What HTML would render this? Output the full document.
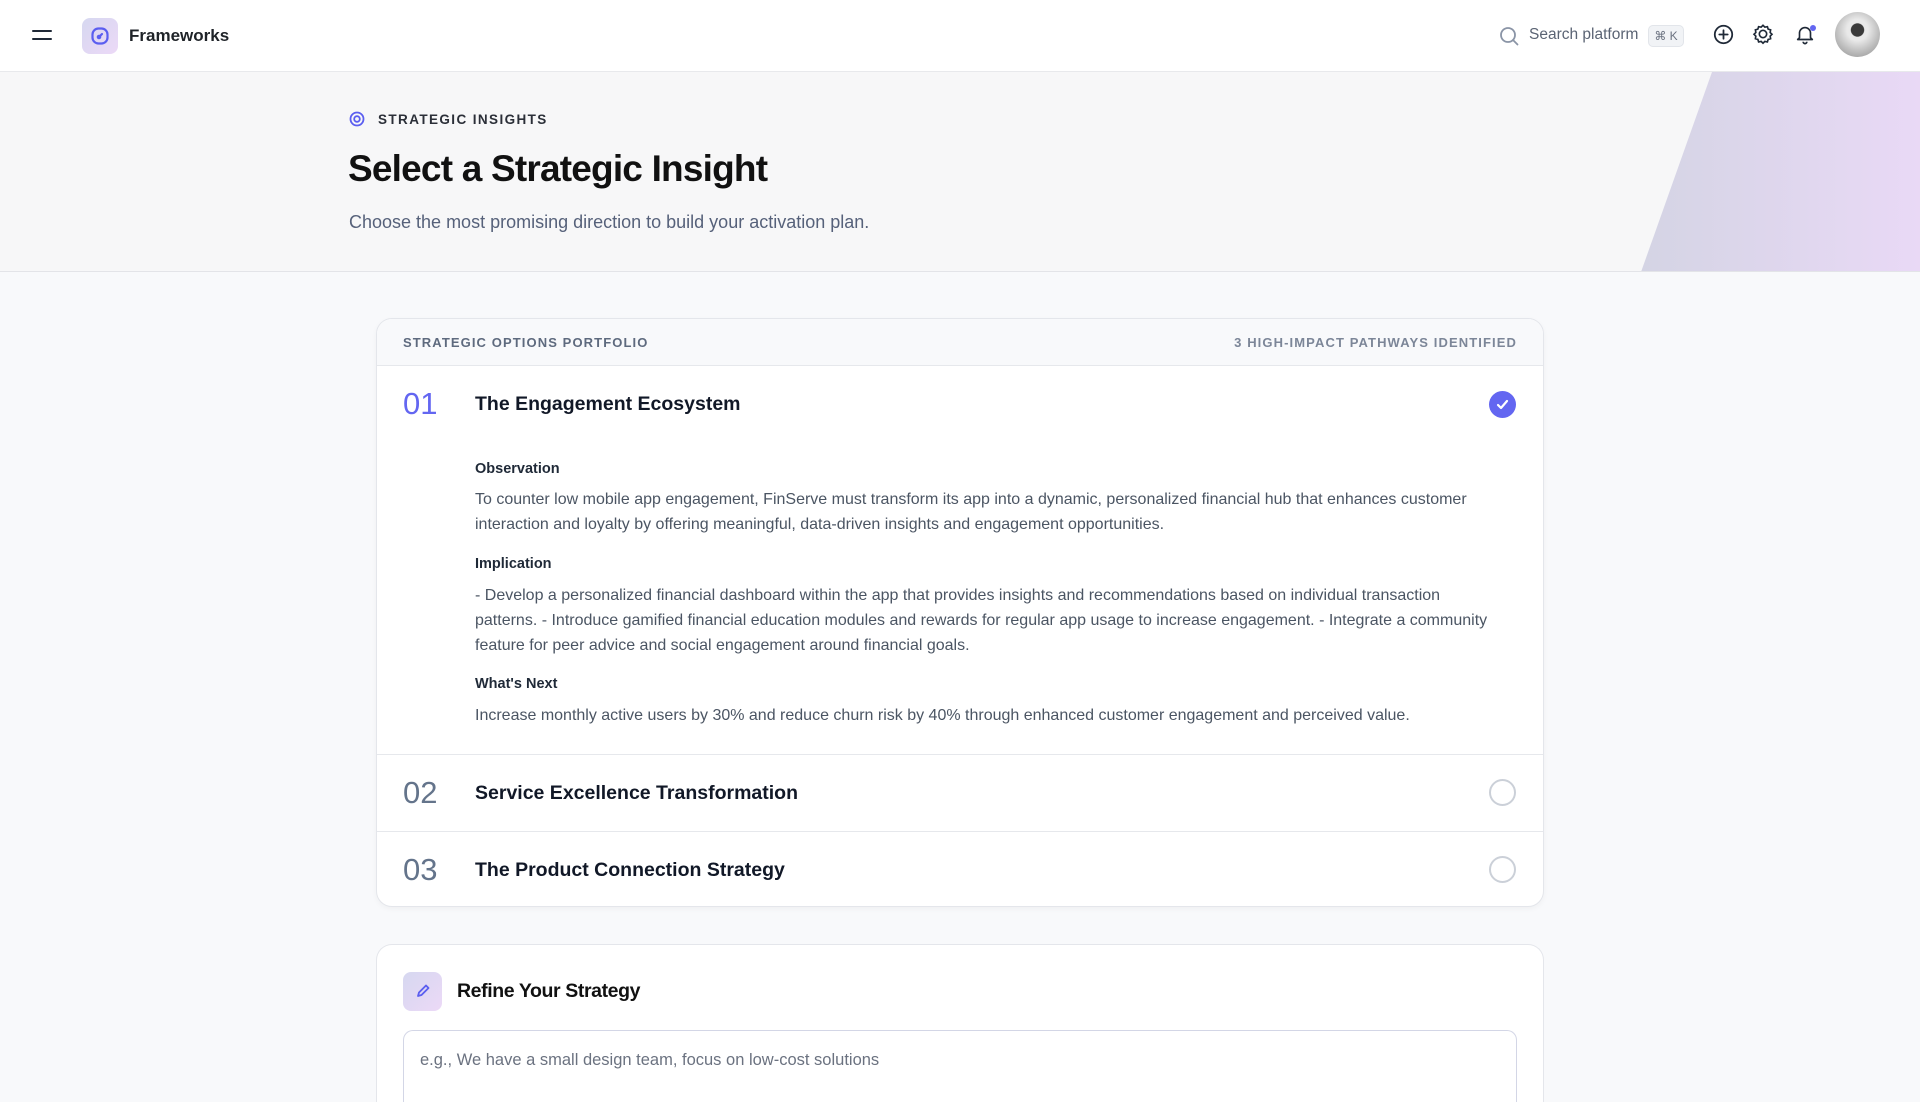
<!DOCTYPE html>
<html style="height:1102px;overflow:hidden"><head><meta charset="utf-8"><style>
*{box-sizing:border-box;margin:0;padding:0}
body{width:1920px;height:1102px;overflow:hidden;background:#f8f9fb;font-family:"Liberation Sans",sans-serif;color:#111827;position:relative}
.top{position:absolute;left:0;top:0;width:1920px;height:72px;background:#fff;border-bottom:1px solid #e8e9ec}
.hero{position:absolute;left:0;top:72px;width:1920px;height:200px;background:#f7f7f8;border-bottom:1px solid #e3e4e8;overflow:hidden}
.abs{position:absolute}
.card{position:absolute;left:376px;width:1168px;background:#fff;border:1px solid #e4e6eb;border-radius:16px;box-shadow:0 2px 6px rgba(0,0,0,.04)}
.num{position:absolute;left:26px;font-size:31px;color:#64748b;font-weight:300}
.ttl{position:absolute;left:98px;font-size:19.5px;font-weight:bold;color:#111827}
.lbl{position:absolute;left:98px;font-size:14.5px;font-weight:bold;color:#1f2937}
.txt{position:absolute;left:98px;font-size:16px;line-height:25px;color:#4b5563;white-space:nowrap}
.rad{position:absolute;left:1112px;width:27px;height:27px;border-radius:50%;border:2px solid #cbd0d8}
</style></head><body>
<div class="top">
  <div class="abs" style="left:32px;top:30px;width:20px;height:2px;background:#1f2937;border-radius:2px"></div>
  <div class="abs" style="left:32px;top:38px;width:20px;height:2px;background:#1f2937;border-radius:2px"></div>
  <div class="abs" style="left:82px;top:18px;width:36px;height:36px;border-radius:8px;background:linear-gradient(135deg,#d6d8f0,#ecd9f7)"></div>
  <svg class="abs" style="left:90px;top:26px" width="20" height="20" viewBox="0 0 20 20" fill="none" stroke="#5b5ef0" stroke-width="2.2"><rect x="2.5" y="2.5" width="15" height="15" rx="6"/><path d="M8.5 11.5l3.5-3.5" stroke-linecap="round"/><circle cx="9" cy="11" r="1.2" fill="#5b5ef0"/></svg>
  <div class="abs" style="left:129px;top:26px;font-size:17px;font-weight:bold;color:#1f2328">Frameworks</div>
  <svg class="abs" style="left:1499px;top:26px" width="20" height="20" viewBox="0 0 20 20" fill="none" stroke="#8a94a6" stroke-width="1.8"><circle cx="9" cy="9" r="7"/><path d="M14 14l4.5 4.5" stroke-linecap="round"/></svg>
  <div class="abs" style="left:1529px;top:26px;font-size:15.5px;color:#5b6474">Search platform</div>
  <div class="abs" style="left:1648px;top:25px;width:36px;height:22px;border-radius:5px;background:#f1f3f6;border:1px solid #e2e5ea;font-size:12px;color:#6b7280;text-align:center;line-height:20px">⌘ K</div>
  <svg class="abs" style="left:1713px;top:24px" width="21" height="21" viewBox="0 0 20 20" fill="none" stroke="#1f2937" stroke-width="1.7"><circle cx="10" cy="10" r="8.3"/><path d="M10 6v8M6 10h8" stroke-linecap="round"/></svg>
  <svg class="abs" style="left:1752px;top:23px" width="22" height="22" viewBox="0 0 24 24" fill="none" stroke="#1f2937" stroke-width="1.8"><path d="M12 2.5l2 2 2.8-.5.8 2.7 2.7.8-.5 2.8 2 2-2 2 .5 2.8-2.7.8-.8 2.7-2.8-.5-2 2-2-2-2.8.5-.8-2.7-2.7-.8.5-2.8-2-2 2-2-.5-2.8 2.7-.8.8-2.7 2.8.5z"/><circle cx="12" cy="12" r="4"/></svg>
  <svg class="abs" style="left:1794px;top:23px" width="22" height="22" viewBox="0 0 24 24" fill="none" stroke="#1f2937" stroke-width="1.8"><path d="M6 16V11a6 6 0 0112 0v5l2 2H4z" stroke-linejoin="round"/><path d="M10 20.5a2 2 0 004 0"/></svg>
  <div class="abs" style="left:1810px;top:25px;width:6px;height:6px;border-radius:50%;background:#6366f1"></div>
  <div class="abs" style="left:1835px;top:12px;width:45px;height:45px;border-radius:50%;background:radial-gradient(circle at 50% 40%,#3a3a3a 0 18%,#e9e9e9 20% 30%,#bfbfbf 60%,#8c8c8c)"></div>
</div>
<div class="hero">
  <div class="abs" style="left:1641px;top:0;width:279px;height:200px;background:linear-gradient(90deg,#d4d4e4,#e9d9f6);clip-path:polygon(71px 0,279px 0,279px 200px,0 200px)"></div>
  <svg class="abs" style="left:349px;top:39px" width="16" height="16" viewBox="0 0 16 16" fill="none" stroke="#5b5ef0" stroke-width="1.8"><circle cx="8" cy="8" r="6.5"/><circle cx="8" cy="8" r="2.8"/></svg>
  <div class="abs" style="left:378px;top:40px;font-size:13.5px;font-weight:bold;letter-spacing:1.4px;color:#2b2f38">STRATEGIC INSIGHTS</div>
  <div class="abs" style="left:348px;top:76px;font-size:37px;font-weight:bold;letter-spacing:-0.8px;color:#111">Select a Strategic Insight</div>
  <div class="abs" style="left:349px;top:140px;font-size:18px;color:#56617a">Choose the most promising direction to build your activation plan.</div>
</div>
<div class="card" style="top:318px;height:589px;overflow:hidden">
  <div class="abs" style="left:0;top:0;width:1166px;height:47px;background:#f8f9fb;border-bottom:1px solid #e6e8ec"></div>
  <div class="abs" style="left:26px;top:16px;font-size:13px;font-weight:bold;letter-spacing:1.1px;color:#5e6a7e">STRATEGIC OPTIONS PORTFOLIO</div>
  <div class="abs" style="right:26px;top:16px;font-size:13px;font-weight:bold;letter-spacing:1.1px;color:#7c8698">3 HIGH-IMPACT PATHWAYS IDENTIFIED</div>
  <div class="num" style="top:67px;color:#6366f1">01</div>
  <div class="ttl" style="top:74px">The Engagement Ecosystem</div>
  <div class="abs" style="left:1112px;top:72px;width:27px;height:27px;border-radius:50%;background:#6366f1"><svg width="27" height="27" viewBox="0 0 27 27" fill="none" stroke="#fff" stroke-width="2.2" stroke-linecap="round" stroke-linejoin="round"><path d="M9 14l3 3 6-7"/></svg></div>
  <div class="lbl" style="top:142px">Observation</div>
  <div class="txt" style="top:168px">To counter low mobile app engagement, FinServe must transform its app into a dynamic, personalized financial hub that enhances customer<br>interaction and loyalty by offering meaningful, data-driven insights and engagement opportunities.</div>
  <div class="lbl" style="top:237px">Implication</div>
  <div class="txt" style="top:264px">- Develop a personalized financial dashboard within the app that provides insights and recommendations based on individual transaction<br>patterns. - Introduce gamified financial education modules and rewards for regular app usage to increase engagement. - Integrate a community<br>feature for peer advice and social engagement around financial goals.</div>
  <div class="lbl" style="top:357px">What's Next</div>
  <div class="txt" style="top:384px">Increase monthly active users by 30% and reduce churn risk by 40% through enhanced customer engagement and perceived value.</div>
  <div class="abs" style="left:0;top:435px;width:1166px;height:1px;background:#e6e8ec"></div>
  <div class="num" style="top:456px">02</div>
  <div class="ttl" style="top:463px">Service Excellence Transformation</div>
  <div class="rad" style="top:460px"></div>
  <div class="abs" style="left:0;top:512px;width:1166px;height:1px;background:#e6e8ec"></div>
  <div class="num" style="top:533px">03</div>
  <div class="ttl" style="top:540px">The Product Connection Strategy</div>
  <div class="rad" style="top:537px"></div>
</div>
<div class="card" style="top:944px;height:158px;overflow:hidden;border-bottom:none;border-radius:16px 16px 0 0;box-shadow:none">
  <div class="abs" style="left:26px;top:27px;width:39px;height:39px;border-radius:8px;background:linear-gradient(135deg,#d6d8f0,#ecd9f7)"><svg width="39" height="39" viewBox="0 0 39 39" fill="none" stroke="#5b5ef0" stroke-width="1.8" stroke-linejoin="round"><path d="M15 24l1-3.5 7-7 2.5 2.5-7 7z"/></svg></div>
  <div class="abs" style="left:80px;top:35px;font-size:19.5px;font-weight:bold;letter-spacing:-0.4px;color:#111">Refine Your Strategy</div>
  <div class="abs" style="left:26px;top:85px;width:1114px;height:72px;border:1.5px solid #d3d6e6;border-bottom:none;border-radius:10px 10px 0 0"></div>
  <div class="abs" style="left:43px;top:106px;font-size:16.5px;color:#6b7280">e.g., We have a small design team, focus on low-cost solutions</div>
</div>
</body></html>
